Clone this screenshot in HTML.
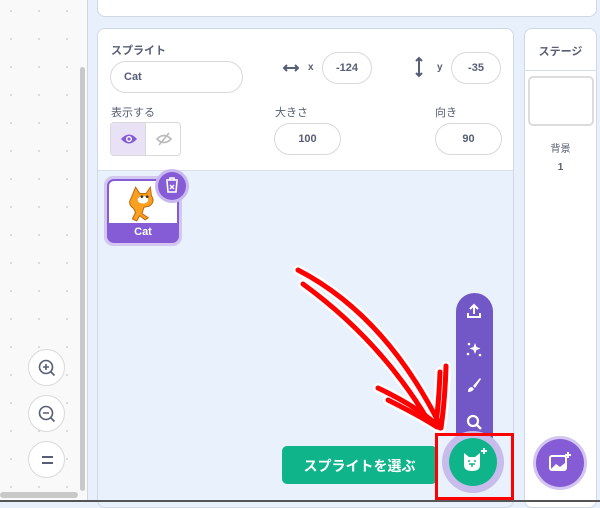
<!DOCTYPE html>
<html><head><meta charset="utf-8"><style>
*{margin:0;padding:0;box-sizing:border-box}
body{width:600px;height:502px;overflow:hidden;position:relative;background:#e8f0fb;font-family:"Liberation Sans","Noto Sans CJK JP",sans-serif;color:#575e75}
.abs{position:absolute}
.ws{left:0;top:0;width:88px;height:502px;background:#f9f9f9;background-image:radial-gradient(circle,#d9d9d9 1px,transparent 1.2px);background-size:28px 28px;background-position:-3px -3px;border-right:1px solid #d0d8e6}
.pill{position:absolute;border:1px solid #d9d9d9;border-radius:20px;background:#fff;text-align:center;font-size:11px;font-weight:bold;color:#575e75}
.lbl{position:absolute;font-size:11px;color:#575e75}
.zb{position:absolute;left:28px;width:37px;height:37px;border-radius:50%;background:#fff;border:1px solid #d9d9d9}
</style></head><body>
<div class="abs ws"></div>
<div class="abs" style="left:80px;top:67px;width:5px;height:424px;background:#c9c9c9;border-radius:3px"></div>
<div class="abs" style="left:0;top:492px;width:78px;height:6px;background:#c9c9c9;border-radius:3px"></div>
<div class="zb" style="top:349px"><svg width="37" height="37"><circle cx="17" cy="17" r="6.5" fill="none" stroke="#575e75" stroke-width="1.6"/><path d="M21.5 21.5l4 4M14 17h6M17 14v6" stroke="#575e75" stroke-width="1.6"/></svg></div>
<div class="zb" style="top:395px"><svg width="37" height="37"><circle cx="17" cy="17" r="6.5" fill="none" stroke="#575e75" stroke-width="1.6"/><path d="M21.5 21.5l4 4M14 17h6" stroke="#575e75" stroke-width="1.6"/></svg></div>
<div class="zb" style="top:441px"><svg width="37" height="37"><path d="M13 15h11M13 21h11" stroke="#575e75" stroke-width="2"/></svg></div>

<div class="abs" style="left:97px;top:-10px;width:500px;height:27px;background:#fff;border:1px solid #d0d8e6;border-radius:8px"></div>

<div class="abs" style="left:97px;top:28px;width:417px;height:480px;background:#e9f1fc;border:1px solid #d0d8e6;border-radius:8px;overflow:hidden">
 <div class="abs" style="left:0;top:0;width:417px;height:142px;background:#fff;border-bottom:1px solid #d9dfe9"></div>
</div>
<div class="lbl" style="left:111px;top:42px;font-weight:bold">スプライト</div>
<div class="pill" style="left:110px;top:61px;width:133px;height:32px;text-align:left;padding:9px 13px">Cat</div>
<svg class="abs" style="left:282px;top:62px" width="18" height="12"><path d="M2 6h14M5 3L2 6l3 3M13 3l3 3-3 3" fill="none" stroke="#575e75" stroke-width="2"/></svg>
<div class="lbl" style="left:308px;top:62px;font-weight:bold;font-size:10px">x</div>
<div class="pill" style="left:322px;top:52px;width:50px;height:32px;padding-top:9px">-124</div>
<svg class="abs" style="left:413px;top:56px" width="12" height="22"><path d="M6 2v18M3 5l3-3 3 3M3 17l3 3 3-3" fill="none" stroke="#575e75" stroke-width="2"/></svg>
<div class="lbl" style="left:437px;top:62px;font-weight:bold;font-size:10px">y</div>
<div class="pill" style="left:451px;top:52px;width:50px;height:32px;padding-top:9px">-35</div>
<div class="lbl" style="left:111px;top:104px">表示する</div>
<div class="abs" style="left:110px;top:122px;width:71px;height:34px;border:1px solid #d9d9d9;border-radius:4px;overflow:hidden;background:#fff">
 <div class="abs" style="left:0;top:0;width:35px;height:34px;background:#e9e2f7;border-right:1px solid #d9d9d9"></div>
 <svg class="abs" style="left:9px;top:9px" width="18" height="14"><path d="M1 7Q9-2 17 7Q9 16 1 7z" fill="#855cd6"/><circle cx="9" cy="7" r="3" fill="#fff"/><circle cx="9" cy="7" r="1.6" fill="#855cd6"/></svg>
 <svg class="abs" style="left:44px;top:9px" width="18" height="14"><path d="M2 7Q9 0 16 7Q9 14 2 7z" fill="none" stroke="#bbb" stroke-width="1.6"/><path d="M4 13L14 1" stroke="#bbb" stroke-width="1.6"/></svg>
</div>
<div class="lbl" style="left:275px;top:104px">大きさ</div>
<div class="pill" style="left:274px;top:123px;width:67px;height:32px;padding-top:9px">100</div>
<div class="lbl" style="left:435px;top:104px">向き</div>
<div class="pill" style="left:435px;top:123px;width:67px;height:32px;padding-top:9px">90</div>

<div class="abs" style="left:104px;top:176px;width:78px;height:70px;border-radius:9px;background:#d3c6f0"></div>
<div class="abs" style="left:107px;top:179px;width:72px;height:64px;border-radius:7px;background:#855cd6;overflow:hidden">
 <div class="abs" style="left:2px;top:2px;width:68px;height:42px;background:#fff;border-radius:5px 5px 0 0"></div>
 <div class="abs" style="left:0;top:47px;width:72px;text-align:center;color:#fff;font-size:11px;font-weight:bold">Cat</div>
</div>
<svg class="abs" style="left:124px;top:183px" width="40" height="40" viewBox="0 0 36 38"><path d="M10 4l4 6h6l4-6 1 8q4 6-2 10l-5 1-2 6 6 4-3 2-5-4-3 5-4-2 3-6-2-4q-6-4-2-10z" fill="#f9a021" stroke="#c26a0e" stroke-width="1"/><ellipse cx="17" cy="16" rx="5" ry="3.5" fill="#fff"/><circle cx="16" cy="13" r="1.3" fill="#333"/><circle cx="21" cy="13" r="1.3" fill="#333"/></svg>
<div class="abs" style="left:155px;top:169px;width:34px;height:34px;border-radius:50%;background:#c9b8ef"></div>
<div class="abs" style="left:158px;top:172px;width:28px;height:28px;border-radius:50%;background:#855cd6"></div>
<svg class="abs" style="left:165px;top:177px" width="14" height="17"><path d="M1 3h12M5 3V1h4v2M2 4l1 11h8l1-11" fill="none" stroke="#fff" stroke-width="1.6"/><path d="M5 8l4 4M9 8l-4 4" stroke="#fff" stroke-width="1.3"/></svg>

<div class="abs" style="left:524px;top:28px;width:73px;height:480px;background:#fff;border:1px solid #d0d8e6;border-radius:8px"></div>
<div class="abs" style="left:524px;top:70px;width:73px;height:1px;background:#d9dfe9"></div>
<div class="lbl" style="left:524px;top:43px;width:73px;text-align:center;font-weight:bold">ステージ</div>
<div class="abs" style="left:528px;top:76px;width:66px;height:50px;border:2px solid #dcdcdc;border-radius:5px;background:#fff"></div>
<div class="lbl" style="left:524px;top:140px;width:73px;text-align:center;font-size:10px">背景</div>
<div class="lbl" style="left:524px;top:162px;width:73px;text-align:center;font-size:10px;font-weight:bold">1</div>
<div class="abs" style="left:533px;top:436px;width:54px;height:54px;border-radius:50%;background:#d3c6f0"></div>
<div class="abs" style="left:536px;top:439px;width:48px;height:48px;border-radius:50%;background:#855cd6"></div>
<svg class="abs" style="left:548px;top:451px" width="24" height="22"><rect x="2" y="5" width="16" height="14" rx="2" fill="none" stroke="#fff" stroke-width="2"/><path d="M3 18l5-5 4 3 5-4v6z" fill="#fff"/><path d="M20 1v6M17 4h6" stroke="#fff" stroke-width="2"/></svg>
<div class="abs" style="left:0;top:500px;width:600px;height:2px;background:#555"></div>

<div class="abs" style="left:456px;top:293px;width:37px;height:165px;border-radius:19px 19px 0 0;background:#7158c6"></div>
<svg class="abs" style="left:465px;top:302px" width="18" height="18"><path d="M9 12V3M5 7l4-4 4 4M3 11v4h12v-4" fill="none" stroke="#fff" stroke-width="2"/></svg>
<svg class="abs" style="left:465px;top:340px" width="18" height="18"><path d="M10 3l1.5 4 4 1.5-4 1.5-1.5 4-1.5-4-4-1.5 4-1.5z" fill="#fff"/><circle cx="4" cy="4" r="1.3" fill="#fff"/><circle cx="3" cy="14" r="1.3" fill="#fff"/><circle cx="15" cy="15" r="1.3" fill="#fff"/></svg>
<svg class="abs" style="left:465px;top:376px" width="18" height="18"><path d="M15 2L8 10l2 2 6-9z" fill="#fff"/><path d="M7 11q-4 0-4 5 4 0 6-3z" fill="#fff"/></svg>
<svg class="abs" style="left:465px;top:413px" width="18" height="18"><circle cx="8" cy="8" r="5" fill="none" stroke="#fff" stroke-width="2.2"/><path d="M12 12l4 4" stroke="#fff" stroke-width="2.4"/></svg>

<div class="abs" style="left:282px;top:446px;width:155px;height:38px;border-radius:5px;background:#10b48a;color:#fff;font-size:14px;font-weight:bold;text-align:center;padding-top:10px">スプライトを選ぶ</div>
<div class="abs" style="left:442px;top:431px;width:62px;height:62px;border-radius:50%;background:#c7bcec"></div>
<div class="abs" style="left:449px;top:438px;width:48px;height:48px;border-radius:50%;background:#10b48a"></div>
<svg class="abs" style="left:459px;top:447px" width="30" height="28"><path d="M5 6l5 4h6l5-4v12q0 6-8 6-8 0-8-6z" fill="#fff"/><path d="M10 17h6M13 17v3" stroke="#10b48a" stroke-width="1.5"/><circle cx="10" cy="14" r="1" fill="#10b48a"/><circle cx="16" cy="14" r="1" fill="#10b48a"/><path d="M25 1v6M22 4h6" stroke="#fff" stroke-width="2"/></svg>

<svg class="abs" style="left:0;top:0" width="600" height="502">
<g fill="none" stroke-linecap="round" stroke-linejoin="round">
<g stroke="#fff" stroke-width="10">
<path d="M298 270Q385 315 440 425"/><path d="M303 284Q380 340 428 420"/><path d="M378 388Q420 408 440 428"/><path d="M446 366Q445 400 441 428"/><path d="M388 400Q420 416 437 427"/><path d="M440 372Q439 400 436 424"/>
</g>
<g stroke="#f00" stroke-width="5">
<path d="M298 270Q385 315 440 425"/><path d="M303 284Q380 340 428 420"/><path d="M378 388Q420 408 440 428"/><path d="M446 366Q445 400 441 428"/><path d="M388 400Q420 416 437 427"/><path d="M440 372Q439 400 436 424"/>
</g>
</g>
<rect x="436.5" y="434.5" width="76" height="64" fill="none" stroke="#f00" stroke-width="3"/>
</svg>
</body></html>
